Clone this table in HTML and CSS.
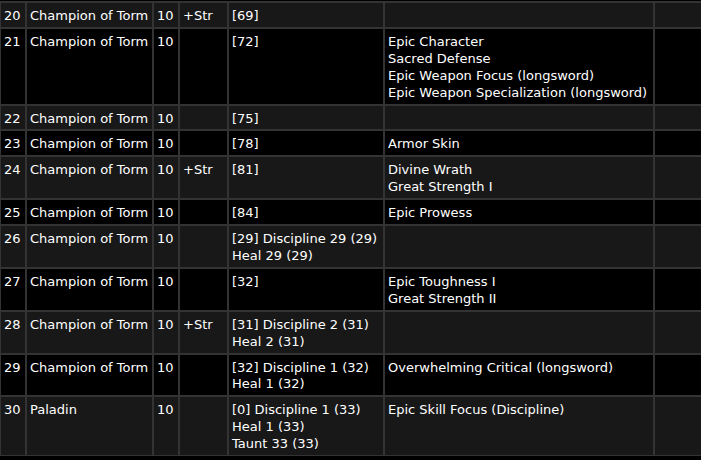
FILE: index.html
```html
<!DOCTYPE html>
<html>
<head>
<meta charset="utf-8">
<link rel="stylesheet" href="styles.css">
</head>
<body>
<table class="levels">
  <colgroup>
    <col class="c-lvl"><col class="c-class"><col class="c-cl"><col class="c-ab"><col class="c-skill"><col class="c-feat"><col class="c-last">
  </colgroup>
  <tbody>
    <tr class="odd"><td>20</td><td>Champion of Torm</td><td>10</td><td>+Str</td><td>[69]</td><td></td><td></td></tr>
    <tr class="even"><td>21</td><td>Champion of Torm</td><td>10</td><td></td><td>[72]</td><td>Epic Character<br>Sacred Defense<br>Epic Weapon Focus (longsword)<br>Epic Weapon Specialization (longsword)</td><td></td></tr>
    <tr class="odd"><td>22</td><td>Champion of Torm</td><td>10</td><td></td><td>[75]</td><td></td><td></td></tr>
    <tr class="even"><td>23</td><td>Champion of Torm</td><td>10</td><td></td><td>[78]</td><td>Armor Skin</td><td></td></tr>
    <tr class="odd"><td>24</td><td>Champion of Torm</td><td>10</td><td>+Str</td><td>[81]</td><td>Divine Wrath<br>Great Strength I</td><td></td></tr>
    <tr class="even"><td>25</td><td>Champion of Torm</td><td>10</td><td></td><td>[84]</td><td>Epic Prowess</td><td></td></tr>
    <tr class="odd"><td>26</td><td>Champion of Torm</td><td>10</td><td></td><td>[29] Discipline 29 (29)<br>Heal 29 (29)</td><td></td><td></td></tr>
    <tr class="even"><td>27</td><td>Champion of Torm</td><td>10</td><td></td><td>[32]</td><td>Epic Toughness I<br>Great Strength II</td><td></td></tr>
    <tr class="odd"><td>28</td><td>Champion of Torm</td><td>10</td><td>+Str</td><td>[31] Discipline 2 (31)<br>Heal 2 (31)</td><td></td><td></td></tr>
    <tr class="even"><td>29</td><td>Champion of Torm</td><td>10</td><td></td><td>[32] Discipline 1 (32)<br>Heal 1 (32)</td><td>Overwhelming Critical (longsword)</td><td></td></tr>
    <tr class="odd"><td>30</td><td>Paladin</td><td>10</td><td></td><td>[0] Discipline 1 (33)<br>Heal 1 (33)<br>Taunt 33 (33)</td><td>Epic Skill Focus (Discipline)</td><td></td></tr>
  </tbody>
</table>
</body>
</html>
```
FILE: styles.css
```css
html, body {
  margin: 0;
  padding: 0;
  background: #000;
}
body {
  font-family: "DejaVu Sans", Verdana, sans-serif;
  font-size: 13px;
  color: #fff;
  overflow: hidden;
}
.levels {
  table-layout: fixed;
  border-collapse: separate;
  border-spacing: 0;
  width: 702px;
  margin-top: 1px;
  border-top: 1px solid #333;
}
.c-lvl { width: 26px; }
.c-class { width: 127px; }
.c-cl { width: 26px; }
.c-ab { width: 49px; }
.c-skill { width: 156px; }
.c-feat { width: 270px; }
.c-last { width: 48px; }
.levels td {
  border: 1px solid #333;
  padding: 5px 1px 2px 3px;
  line-height: 16.9px;
  vertical-align: top;
  white-space: nowrap;
  overflow: hidden;
}
.levels tr.odd td { background: #181818; }
.levels tr.even td { background: #000; }
```
